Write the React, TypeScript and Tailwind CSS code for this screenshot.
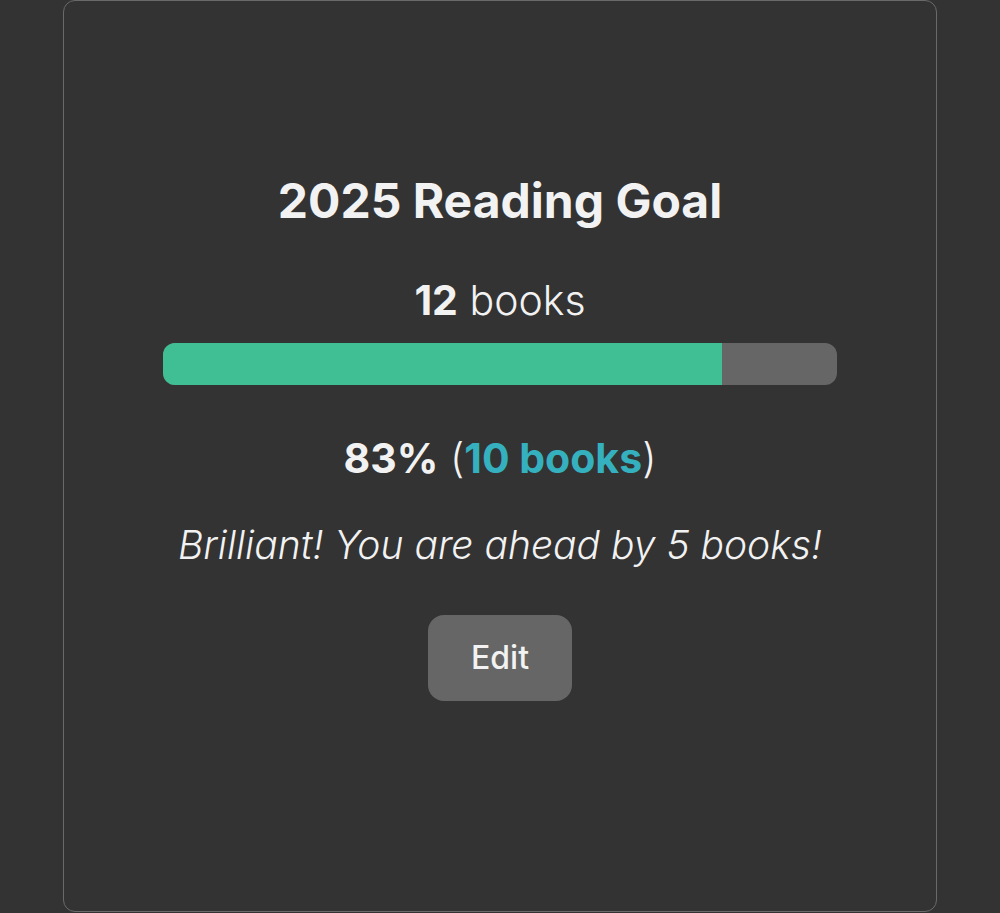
import React from "react";

export default function App() {
  return (
    <div className="w-[1000px] h-[913px] bg-[#333333] flex justify-center overflow-hidden" style={{ fontFamily: "Inter, 'Noto Sans', sans-serif" }}>
      <div className="w-[874px] h-[912px] border border-[#6a6a6a] rounded-[12px] flex flex-col items-center pt-[172px]">
        <h1 className="text-[48px] leading-[56px] font-bold text-[#f2f2f2]">2025 Reading Goal</h1>
        <div className="mt-[47px] text-[41px] leading-[48px] text-[#f2f2f2]">
          <span className="font-bold">12</span> <span className="font-light">books</span>
        </div>
        <div className="mt-[19px] w-[674px] h-[42px] rounded-[12px] bg-[#666666] overflow-hidden flex">
          <div className="h-full bg-[#40bf94]" style={{ width: "83%" }} />
        </div>
        <div className="mt-[49px] text-[41px] leading-[48px] text-[#f2f2f2]">
          <span className="font-bold">83%</span> <span className="font-light">(</span>
          <span className="font-bold text-[#35b0be]">10 books</span>
          <span className="font-light">)</span>
        </div>
        <div className="mt-[41px] text-[39px] leading-[44px] italic font-light text-[#f2f2f2]">
          Brilliant! You are ahead by 5 books!
        </div>
        <button className="mt-[48px] w-[144px] h-[86px] rounded-[16px] bg-[#666666] text-[32px] font-medium text-[#f2f2f2]">
          Edit
        </button>
      </div>
    </div>
  );
}
